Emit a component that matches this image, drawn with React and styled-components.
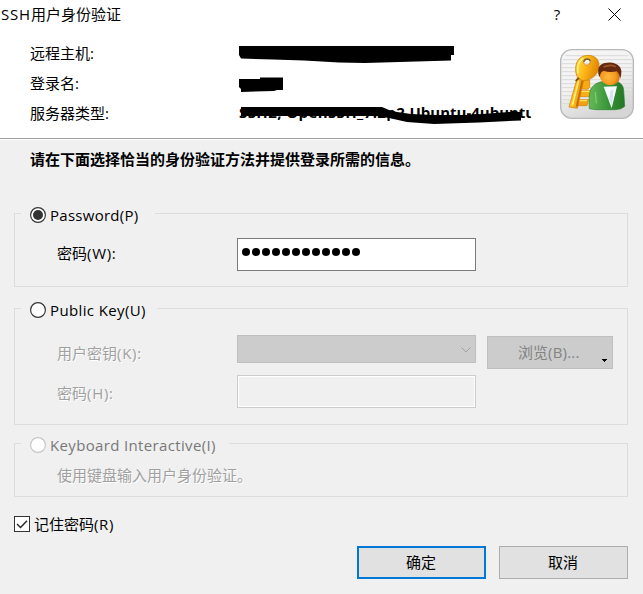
import React from "react";
import styled, { createGlobalStyle } from "styled-components";

const Global = createGlobalStyle`
  * { box-sizing: border-box; }
  body {
    margin: 0;
    background: #f0f0f0;
    color: #000;
    font: 15px/20px "Open Sans", "Noto Sans CJK SC", sans-serif;
  }
  button, input { font: inherit; }
`;

const Dialog = styled.main`
  width: 643px;
  height: 594px;
  overflow: hidden;
  background: #f0f0f0;
`;

const Label = styled.span`
  display: block;
  white-space: nowrap;
  height: 20px;
  line-height: 20px;
  letter-spacing: ${(p) => p.$spacing || 0}px;
  color: ${(p) => (p.$disabled ? "#a0a0a0" : "inherit")};
  text-shadow: ${(p) => (p.$disabled ? "1px 1px 0 #fff" : "none")};
`;

const Latin = styled.span`
  letter-spacing: ${(p) => p.$spacing}px;
`;

const Header = styled.header`
  height: 140px;
  background: #fff;
  border-bottom: 1px solid #fff;
  box-shadow: inset 0 -1px 0 #a0a0a0;
`;

const TitleBar = styled.div`
  display: flex;
  height: 28px;
  padding: 4px 14px 0 1px;
`;

const Title = styled(Label)`
  flex: 1;
`;

const TitleButton = styled.button`
  display: block;
  height: 20px;
  width: ${(p) => p.$width}px;
  padding: 0;
  border: 0;
  background: none;
  text-align: center;
  line-height: 20px;
`;

const Summary = styled.div`
  display: flex;
  padding: 15px 9px 0 30px;
`;

const Details = styled.dl`
  display: grid;
  grid-template-columns: 209px 292px;
  grid-auto-rows: 30px;
  margin: 0;
  width: 530px;
`;

const Term = styled.dt`
  line-height: 20px;
`;

const Value = styled.dd`
  position: relative;
  height: 24px;
  margin: 0;
  overflow: hidden;
  white-space: nowrap;
  font-weight: 700;
  line-height: 19px;
`;

const Marker = styled.svg`
  position: absolute;
  left: 0;
  top: 0;
`;

const Badge = styled.svg`
  display: block;
  margin-top: 6px;
`;

const Instruction = styled.p`
  height: 20px;
  margin: 9px 0 44px 30px;
  line-height: 20px;
  font-weight: 700;
  white-space: nowrap;
`;

const Group = styled.section`
  width: 614px;
  height: ${(p) => p.$height}px;
  margin: 0 0 ${(p) => p.$gap}px 14px;
  border: 1px solid #dcdcdc;
  border-top: 0;
`;

const Legend = styled.div`
  display: flex;
  align-items: flex-start;
  height: 1px;
  &::before, &::after {
    content: "";
    height: 1px;
    background: #dcdcdc;
  }
  &::before { width: 6px; }
  &::after { flex: 1; }
`;

const Choice = styled.label`
  display: flex;
  flex: none;
  align-items: center;
  gap: 4px;
  width: ${(p) => p.$width}px;
  height: 20px;
  margin-top: -8px;
  padding-left: 9px;
  color: ${(p) => (p.$disabled ? "#787878" : "#000")};
`;

const Field = styled.div`
  display: flex;
  align-items: flex-start;
  height: 33px;
  margin-top: ${(p) => p.$top}px;
  padding-left: 42px;
`;

const FieldLabel = styled(Label)`
  width: 180px;
  margin-top: ${(p) => p.$drop}px;
`;

const TextBox = styled.div`
  display: flex;
  align-items: flex-start;
  gap: 2px;
  width: 239px;
  height: 33px;
  padding: 9px 0 0 4px;
  border: 1px solid ${(p) => (p.$disabled ? "#cccccc" : "#7a7a7a")};
  background: ${(p) => (p.$disabled ? "#f0f0f0" : "#fff")};
  box-shadow: ${(p) => (p.$disabled ? "inset 0 0 0 1px #fff" : "none")};
`;

const Dot = styled.i`
  width: 8px;
  height: 8px;
  border-radius: 50%;
  background: #000;
`;

const Combo = styled.div`
  display: flex;
  justify-content: flex-end;
  width: 239px;
  height: 28px;
  padding: 11px 4px 0 0;
  border: 1px solid #bfbfbf;
  background: #ccc;
`;

const Browse = styled.button`
  display: flex;
  width: 126px;
  height: 33px;
  margin: 1px 0 0 11px;
  padding: 5px 5px 0 30px;
  border: 1px solid #bfbfbf;
  background: #ccc;
  color: #838383;
  line-height: 20px;
`;

const BrowseText = styled.span`
  flex: 1;
  text-align: left;
  white-space: nowrap;
`;

const Arrow = styled.svg`
  display: block;
  margin-top: 17px;
`;

const Hint = styled(Label)`
  margin: 21px 0 0 42px;
`;

const Remember = styled.label`
  display: flex;
  align-items: flex-start;
  gap: 4px;
  height: 20px;
  margin-left: 14px;
`;

const Check = styled.svg`
  display: block;
  margin-top: 2px;
`;

const Actions = styled.footer`
  display: flex;
  justify-content: flex-end;
  gap: 13px;
  margin-top: 12px;
  padding-right: 15px;
`;

const Action = styled.button`
  width: 129px;
  height: 33px;
  padding: 0 1px 1px 0;
  border: ${(p) => (p.$primary ? "2px solid #0078d7" : "1px solid #adadad")};
  background: #e1e1e1;
  color: #000;
`;

function Radio({ checked, disabled }) {
  return (
    <svg width="16" height="16" viewBox="0 0 16 16">
      <circle cx="8" cy="8" r="7.4" fill="#fff" stroke={disabled ? "#c6c6c6" : "#333"} strokeWidth="1.15" />
      {checked && <circle cx="8" cy="8" r="5" fill="#333" />}
    </svg>
  );
}

function UserKeyBadge() {
  return (
    <Badge width="74" height="70" viewBox="45 147 222 210">
      <defs>
        <linearGradient id="plate" x1="0" y1="0" x2="0.4" y2="1">
          <stop offset="0" stopColor="#f6f6f6" />
          <stop offset="0.55" stopColor="#f2f2f2" />
          <stop offset="1" stopColor="#d6d6d6" />
        </linearGradient>
        <linearGradient id="gold" x1="0" y1="0" x2="1" y2="0.3">
          <stop offset="0" stopColor="#ffe04a" />
          <stop offset="0.5" stopColor="#fdb91b" />
          <stop offset="1" stopColor="#e28704" />
        </linearGradient>
        <radialGradient id="face" cx="0.45" cy="0.6" r="0.6">
          <stop offset="0" stopColor="#ffb83c" />
          <stop offset="0.6" stopColor="#f39a20" />
          <stop offset="1" stopColor="#c95e09" />
        </radialGradient>
        <linearGradient id="jacket">
          <stop offset="0" stopColor="#67b957" />
          <stop offset="0.55" stopColor="#369438" />
          <stop offset="1" stopColor="#247526" />
        </linearGradient>
      </defs>
      <rect x="47" y="149" width="218" height="206" rx="34" fill="url(#plate)" stroke="#b8b8b8" strokeWidth="4" />
      <path
        d="M62 167H250M52 179H260M50 191H262M50 203H262M50 215H262M50 227H262M50 239H262M50 251H262M50 263H262M50 275H262M50 287H262M50 299H262M50 311H262"
        stroke="#d9d9d9"
        strokeWidth="3"
      />
      <path d="M98 240 L134 240 L134 262 L128 268 L94 266 Z" fill="#f7ab13" stroke="#d27d06" strokeWidth="2" />
      <path d="M94 271 L138 271 L134 290 L90 290 Z" fill="#f8ae16" stroke="#d27d06" strokeWidth="2" />
      <path d="M88 299 L131 299 L126 317 L84 317 Z" fill="#f3a10c" stroke="#d27d06" strokeWidth="2" />
      <path d="M99 274 L134 274 M92 302 L126 302" stroke="#ffe462" strokeWidth="4" />
      <path d="M97 232 L117 236 L97 325 L72 321 Z" fill="url(#gold)" stroke="#c87508" strokeWidth="2" />
      <path d="M101 242 L82 316" stroke="#fff07a" strokeWidth="5" />
      <path d="M112 242 L95 320" stroke="#c46a02" strokeWidth="5" />
      <path
        fillRule="evenodd"
        d="M92 207 C92 180 108 166 130 166 C152 167 163 180 162 199 C160 222 145 238 117 242 C98 239 92 226 92 207 Z M116 188 C118 197 130 198 135 188 C139 176 121 172 116 188 Z"
        fill="url(#gold)"
        stroke="#cf850f"
        strokeWidth="2.500"
      />
      <path d="M99 220 Q94 190 114 174" fill="none" stroke="#fff07a" strokeWidth="5" />
      <path d="M116 185 Q120 174 132 178 L136 183" fill="none" stroke="#6d6047" strokeWidth="4" />
      <path d="M92 243 L102 234" stroke="#70420d" strokeWidth="5" />
      <path d="M133 326 Q130 282 139 264 Q151 248 169 245 L218 245 Q235 253 236 270 L239 319 Q229 329 211 329 L154 329 Z" fill="url(#jacket)" stroke="#2d802d" strokeWidth="2" />
      <path d="M151 276 L154 310" fill="none" stroke="#86c873" strokeWidth="4" />
      <path d="M176 260 L216 259 L200 325 Z" fill="#f6faff" />
      <path d="M196 274 L206 266 L201 316 L193 298 Z" fill="#d5e2ef" />
      <path d="M163 218 Q163 198 184 194 Q212 188 223 209 Q228 239 217 248 Q197 262 178 250 Q163 240 163 218 Z" fill="url(#face)" />
      <path d="M160 222 Q156 196 176 190 Q206 182 222 198 Q234 208 226 236 Q224 222 216 214 Q193 219 178 213 Q167 210 164 232 Z" fill="#65270d" />
      <path d="M176 201 Q195 192 212 200" fill="none" stroke="#9a5831" strokeWidth="5" />
    </Badge>
  );
}

export default function App() {
  return (
    <Dialog>
      <Global />
      <Header>
        <TitleBar>
          <Title><Latin $spacing={0.8}>SSH</Latin>用户身份验证</Title>
          <TitleButton $width={28}>?</TitleButton>
          <TitleButton $width={58} aria-label="关闭">
            <svg width="58" height="20" viewBox="0 0 58 20">
              <path d="M37.500 4.500 L49.500 16.500 M49.500 4.500 L37.500 16.500" stroke="#000" strokeWidth="1" />
            </svg>
          </TitleButton>
        </TitleBar>
        <Summary>
          <Details>
            <Term>远程主机:</Term>
            <Value>
              <Marker width="292" height="24">
                <path d="M0 3 H215 V12 H212 V17.500 L126 20 L100 19.500 L65 17.500 L34 16.500 L2 15.500 L0 12 Z" />
              </Marker>
            </Value>
            <Term>登录名:</Term>
            <Value>
              <Marker width="292" height="24">
                <path d="M0 6 H21 V4.500 H44 V17 H38 L35 18 L2 19 V16 L0 14 Z" />
              </Marker>
            </Value>
            <Term>服务器类型:</Term>
            <Value>
              <Latin $spacing={0.4}>SSH2, OpenSSH_7.2p2 </Latin>
              <Latin $spacing={0}>Ubuntu-4ubuntu</Latin>
              <Marker width="292" height="24">
                <path d="M2 4 H143 L150 7 L158 9 L172 11 L194 12 L230 12 L270 9 H282 V17.500 L240 19.500 L195 21 L168 19 L150 15 L138 13 H2 Z" />
              </Marker>
            </Value>
          </Details>
          <UserKeyBadge />
        </Summary>
      </Header>

      <Instruction>请在下面选择恰当的身份验证方法并提供登录所需的信息。</Instruction>

      <Group $height={74} $gap={21}>
        <Legend>
          <Choice $width={134}>
            <Radio checked />
            <Label $spacing={0.27}>Password(P)</Label>
          </Choice>
        </Legend>
        <Field $top={24}>
          <FieldLabel $drop={5}>密码<Latin $spacing={0.7}>(W):</Latin></FieldLabel>
          <TextBox role="textbox" aria-label="密码">
            {Array.from({ length: 12 }, (_, i) => <Dot key={i} />)}
          </TextBox>
        </Field>
      </Group>

      <Group $height={117} $gap={18}>
        <Legend>
          <Choice $width={136}>
            <Radio />
            <Label $spacing={0.38}>Public Key(U)</Label>
          </Choice>
        </Legend>
        <Field $top={26}>
          <FieldLabel $disabled $drop={8}>用户密钥<Latin $spacing={0.7}>(K):</Latin></FieldLabel>
          <Combo>
            <svg width="10" height="6" viewBox="0 0 10 6">
              <path d="M0.500 0.500 L5 5 L9.500 0.500" fill="none" stroke="#a2a2a2" />
            </svg>
          </Combo>
          <Browse>
            <BrowseText>浏览<Latin $spacing={0.2}>(B)...</Latin></BrowseText>
            <Arrow width="5" height="3" viewBox="0 0 5 3" shapeRendering="crispEdges">
              <path d="M0 0H5V1H4V2H3V3H2V2H1V1H0Z" />
            </Arrow>
          </Browse>
        </Field>
        <Field $top={7}>
          <FieldLabel $disabled $drop={8}>密码<Latin $spacing={0.7}>(H):</Latin></FieldLabel>
          <TextBox $disabled />
        </Field>
      </Group>

      <Group $height={54} $gap={17}>
        <Legend>
          <Choice $width={208} $disabled>
            <Radio disabled />
            <Label $spacing={0.35}>Keyboard Interactive(I)</Label>
          </Choice>
        </Legend>
        <Hint $disabled>使用键盘输入用户身份验证。</Hint>
      </Group>

      <Remember>
        <Check width="16" height="16" viewBox="0 0 16 16">
          <rect x="0.500" y="0.500" width="15" height="15" fill="#fff" stroke="#333" />
          <path d="M3 8 L6.500 11.500 L13 4.800" fill="none" stroke="#222" strokeWidth="1.400" />
        </Check>
        <Label>记住密码<Latin $spacing={0.6}>(R)</Latin></Label>
      </Remember>

      <Actions>
        <Action $primary>确定</Action>
        <Action>取消</Action>
      </Actions>
    </Dialog>
  );
}
